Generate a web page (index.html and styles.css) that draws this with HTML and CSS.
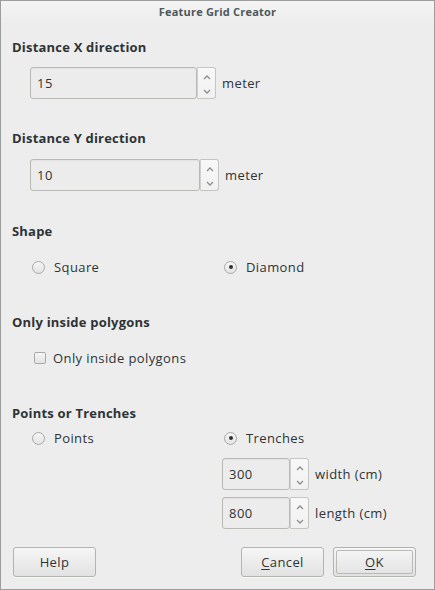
FILE: index.html
```html
<!DOCTYPE html>
<html>
<head>
<meta charset="utf-8">
<link rel="stylesheet" href="styles.css">
</head>
<body>
<div class="dialog">
  <div class="titlebar">Feature Grid Creator</div>
  <div class="content">
    <div class="heading h-x">Distance X direction</div>
    <div class="spinrow sr-x">
      <div class="spin">
        <div class="spin-input w-x">15</div>
        <div class="spin-btns">
          <svg class="arrow" width="8" height="5" viewBox="0 0 8 5"><path d="M1 4 L4 1 L7 4" fill="none" stroke="#8a8f8f" stroke-width="1.3"/></svg>
          <svg class="arrow" width="8" height="5" viewBox="0 0 8 5"><path d="M1 1 L4 4 L7 1" fill="none" stroke="#8a8f8f" stroke-width="1.3"/></svg>
        </div>
      </div>
      <span class="unit">meter</span>
    </div>

    <div class="heading h-y">Distance Y direction</div>
    <div class="spinrow sr-y">
      <div class="spin">
        <div class="spin-input w-y">10</div>
        <div class="spin-btns">
          <svg class="arrow" width="8" height="5" viewBox="0 0 8 5"><path d="M1 4 L4 1 L7 4" fill="none" stroke="#8a8f8f" stroke-width="1.3"/></svg>
          <svg class="arrow" width="8" height="5" viewBox="0 0 8 5"><path d="M1 1 L4 4 L7 1" fill="none" stroke="#8a8f8f" stroke-width="1.3"/></svg>
        </div>
      </div>
      <span class="unit">meter</span>
    </div>

    <div class="heading h-shape">Shape</div>
    <div class="optrow or-shape">
      <label class="opt"><span class="radio"></span>Square</label>
      <label class="opt"><span class="radio checked"></span>Diamond</label>
    </div>

    <div class="heading h-only">Only inside polygons</div>
    <div class="optrow or-only">
      <label class="opt"><span class="check"></span>Only inside polygons</label>
    </div>

    <div class="heading h-pt">Points or Trenches</div>
    <div class="optrow or-pt">
      <label class="opt"><span class="radio"></span>Points</label>
      <label class="opt"><span class="radio checked"></span>Trenches</label>
    </div>

    <div class="trench">
      <div class="spinrow">
        <div class="spin">
          <div class="spin-input w-t">300</div>
          <div class="spin-btns">
            <svg class="arrow" width="8" height="5" viewBox="0 0 8 5"><path d="M1 4 L4 1 L7 4" fill="none" stroke="#8a8f8f" stroke-width="1.3"/></svg>
            <svg class="arrow" width="8" height="5" viewBox="0 0 8 5"><path d="M1 1 L4 4 L7 1" fill="none" stroke="#8a8f8f" stroke-width="1.3"/></svg>
          </div>
        </div>
        <span class="unit">width (cm)</span>
      </div>
      <div class="spinrow">
        <div class="spin">
          <div class="spin-input w-t">800</div>
          <div class="spin-btns">
            <svg class="arrow" width="8" height="5" viewBox="0 0 8 5"><path d="M1 4 L4 1 L7 4" fill="none" stroke="#8a8f8f" stroke-width="1.3"/></svg>
            <svg class="arrow" width="8" height="5" viewBox="0 0 8 5"><path d="M1 1 L4 4 L7 1" fill="none" stroke="#8a8f8f" stroke-width="1.3"/></svg>
          </div>
        </div>
        <span class="unit">length (cm)</span>
      </div>
    </div>

    <div class="buttons">
      <button class="btn">Help</button>
      <div class="btn-group">
        <button class="btn"><u>C</u>ancel</button>
        <button class="btn default"><span class="focus"><u>O</u>K</span></button>
      </div>
    </div>
  </div>
</div>
</body>
</html>
```

FILE: styles.css
```css
* { box-sizing: border-box; }
html, body { margin: 0; padding: 0; background: #ededed; }
body {
  font-family: "Open Sans", "Noto Sans", sans-serif;
  font-size: 13px;
  color: #2e3436;
  letter-spacing: 0.4px;
}
.dialog {
  width: 435px;
  height: 590px;
  border: 1px solid #9c9e9e;
  background: #ededed;
  display: flex;
  flex-direction: column;
}
.titlebar {
  height: 23px;
  line-height: 22px;
  text-align: center;
  font-weight: bold;
  font-size: 11px;
  letter-spacing: 0.2px;
  color: #4d585c;
  background: linear-gradient(#f4f4f4, #ededed);
}
.content {
  padding: 0 18px 0 11px;
  display: flex;
  flex-direction: column;
}
.heading {
  font-weight: bold;
  line-height: 20px;
  height: 20px;
  letter-spacing: 0.2px;
}
.h-x { margin-top: 13px; }
.h-y { margin-top: 29px; }
.h-shape { margin-top: 30px; }
.h-only { margin-top: 35px; }
.h-pt { margin-top: 35px; }

.spinrow {
  display: flex;
  align-items: center;
  gap: 6px;
  height: 32px;
}
.sr-x { margin-top: 10px; padding-left: 18px; }
.sr-y { margin-top: 11px; padding-left: 18px; }
.spin { display: flex; height: 32px; }
.spin-input {
  height: 32px;
  border: 1px solid #b8bab6;
  border-radius: 3px;
  background: #ececec;
  padding-left: 6px;
  line-height: 30px;
  font-size: 13px;
  letter-spacing: 0.5px;
  box-shadow: inset 0 1px 1px rgba(0,0,0,0.04);
}
.w-x { width: 167px; }
.w-y { width: 170px; }
.w-t { width: 68px; }
.spin-btns {
  width: 19px;
  height: 32px;
  border: 1px solid #c4c6c2;
  border-left-color: #d0d1ce;
  border-radius: 0 3px 3px 0;
  background: linear-gradient(#f8f8f8, #f1f1f1);
  display: flex;
  flex-direction: column;
}
.arrow {
  display: block;
  margin: 0 auto;
}
.spin-btns .arrow:first-child { margin-top: 7px; }
.spin-btns .arrow:last-child { margin-top: 9px; }
.unit { font-size: 13px; }

.optrow {
  display: flex;
  height: 20px;
  align-items: center;
  padding-left: 20px;
}
.or-shape { margin-top: 16px; }
.or-only { margin-top: 16px; padding-left: 22px; }
.or-pt { margin-top: 5px; }
.opt {
  display: flex;
  align-items: center;
  width: 192px;
}
.radio {
  width: 13px;
  height: 13px;
  border-radius: 50%;
  border: 1px solid #a9aaa7;
  background: linear-gradient(#f6f6f6, #e3e3e3);
  margin-right: 9px;
  display: flex;
  align-items: center;
  justify-content: center;
}
.radio.checked::after {
  content: "";
  width: 4px;
  height: 4px;
  border-radius: 50%;
  background: #2e3436;
}
.check {
  width: 12px;
  height: 12px;
  border: 1px solid #a9aaa7;
  border-radius: 2px;
  background: linear-gradient(#f6f6f6, #e3e3e3);
  margin-right: 7px;
}

.trench {
  margin-top: 10px;
  padding-left: 210px;
  display: flex;
  flex-direction: column;
  gap: 7px;
}

.buttons {
  margin-top: 18px;
  padding-left: 1px;
  display: flex;
  justify-content: space-between;
}
.btn-group { display: flex; gap: 9px; }
.btn {
  width: 83px;
  height: 30px;
  border: 1px solid #b2b4b0;
  border-radius: 3px;
  background: linear-gradient(#f6f6f6, #e2e2e2);
  font-family: "Open Sans", "Noto Sans", sans-serif;
  font-size: 13px;
  letter-spacing: 0.4px;
  color: #2e3436;
  padding: 0;
  box-shadow: 0 1px 0 rgba(255,255,255,0.6);
}
.btn u { text-decoration-thickness: 1px; text-underline-offset: 2px; }
.btn.default {
  padding: 2px;
  display: flex;
}
.focus {
  flex: 1;
  border: 1px solid #b8bab6;
  border-radius: 2px;
  display: flex;
  align-items: center;
  justify-content: center;
}
```
